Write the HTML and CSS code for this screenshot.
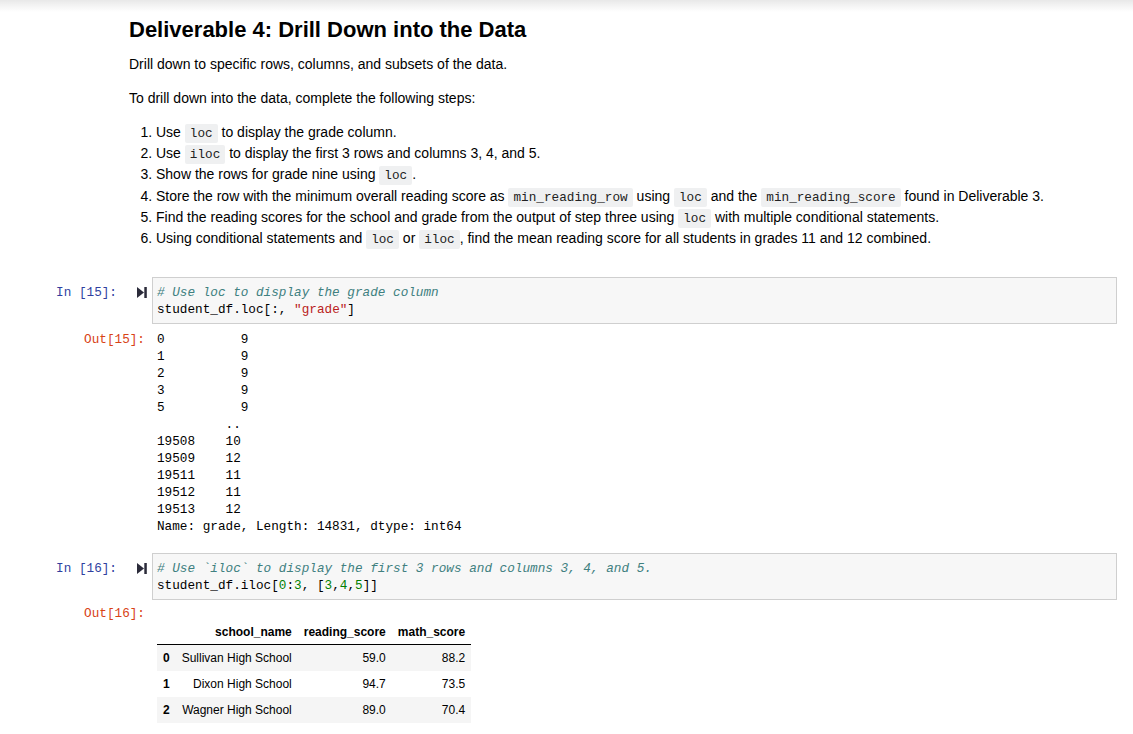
FILE: index.html
```html
<!DOCTYPE html>
<html>
<head>
<meta charset="utf-8">
<link rel="stylesheet" href="styles.css">
</head>
<body>
<div class="topbar"></div>
<div class="notebook">
  <div class="md">
    <h2 class="title">Deliverable 4: Drill Down into the Data</h2>
    <p class="para">Drill down to specific rows, columns, and subsets of the data.</p>
    <p class="para">To drill down into the data, complete the following steps:</p>
    <ol class="steps">
      <li>Use <code class="ic">loc</code> to display the grade column.</li>
      <li>Use <code class="ic">iloc</code> to display the first 3 rows and columns 3, 4, and 5.</li>
      <li>Show the rows for grade nine using <code class="ic">loc</code>.</li>
      <li>Store the row with the minimum overall reading score as <code class="ic">min_reading_row</code> using <code class="ic">loc</code> and the <code class="ic">min_reading_score</code> found in Deliverable 3.</li>
      <li>Find the reading scores for the school and grade from the output of step three using <code class="ic">loc</code> with multiple conditional statements.</li>
      <li>Using conditional statements and <code class="ic">loc</code> or <code class="ic">iloc</code>, find the mean reading score for all students in grades 11 and 12 combined.</li>
    </ol>
  </div>

  <div class="cell cell-first">
    <div class="inrow">
      <div class="prompt in-prompt">In [15]:</div>
      <div class="runbtn"><svg width="10" height="11" viewBox="0 0 10 11"><polygon points="0,0 7,5.5 0,11" fill="#2b2b3a"/><rect x="7.3" y="0" width="2.5" height="11" fill="#2b2b3a"/></svg></div>
      <div class="inbox"><pre class="code"><span class="c"># Use loc to display the grade column</span>
student_df.loc[:, <span class="s">"grade"</span>]</pre></div>
    </div>
    <div class="outrow">
      <div class="prompt out-prompt">Out[15]:</div>
      <pre class="out">0          9
1          9
2          9
3          9
5          9
         ..
19508    10
19509    12
19511    11
19512    11
19513    12
Name: grade, Length: 14831, dtype: int64</pre>
    </div>
  </div>

  <div class="cell cell-second">
    <div class="inrow">
      <div class="prompt in-prompt">In [16]:</div>
      <div class="runbtn"><svg width="10" height="11" viewBox="0 0 10 11"><polygon points="0,0 7,5.5 0,11" fill="#2b2b3a"/><rect x="7.3" y="0" width="2.5" height="11" fill="#2b2b3a"/></svg></div>
      <div class="inbox"><pre class="code"><span class="c"># Use `iloc` to display the first 3 rows and columns 3, 4, and 5.</span>
student_df.iloc[<span class="n">0</span>:<span class="n">3</span>, [<span class="n">3</span>,<span class="n">4</span>,<span class="n">5</span>]]</pre></div>
    </div>
    <div class="outrow">
      <div class="prompt out-prompt">Out[16]:</div>
      <div class="outhtml">
        <table class="df">
          <thead>
            <tr><th></th><th>school_name</th><th>reading_score</th><th>math_score</th></tr>
          </thead>
          <tbody>
            <tr><th>0</th><td>Sullivan High School</td><td>59.0</td><td>88.2</td></tr>
            <tr><th>1</th><td>Dixon High School</td><td>94.7</td><td>73.5</td></tr>
            <tr><th>2</th><td>Wagner High School</td><td>89.0</td><td>70.4</td></tr>
          </tbody>
        </table>
      </div>
    </div>
  </div>
</div>
</body>
</html>
```

FILE: styles.css
```css
html, body {
  margin: 0;
  padding: 0;
  background: #fff;
}
body {
  font-family: "Liberation Sans", Arial, sans-serif;
  color: #000;
  width: 1133px;
  height: 734px;
  overflow: hidden;
}
.topbar {
  height: 12px;
  background: linear-gradient(#e8e8e8, #f2f2f2 40%, #ffffff);
}
.notebook {
  padding-right: 16px;
}
.md {
  padding-left: 129px;
}
.title {
  margin: 5px 0 0;
  font-size: 22px;
  line-height: 26px;
  font-weight: bold;
}
.para {
  margin: 11px 0 0;
  font-size: 14px;
  line-height: 21px;
}
.para + .para {
  margin-top: 13px;
}
.steps {
  margin: 13px 0 0;
  padding-left: 27px;
  font-size: 14px;
  line-height: 21.2px;
}
.ic {
  font-family: "Liberation Mono", Consolas, monospace;
  font-size: 12.7px;
  line-height: 1;
  background: #eff0f1;
  padding: 2px 5px;
  border-radius: 2px;
  color: #222;
}
.cell {
  display: flex;
  flex-direction: column;
}
.cell-first {
  margin-top: 28px;
}
.cell-second {
  margin-top: 18px;
}
.inrow {
  display: flex;
  align-items: flex-start;
}
.prompt {
  font-family: "Liberation Mono", Consolas, monospace;
  font-size: 12.7px;
  line-height: 17px;
  text-align: right;
  box-sizing: border-box;
}
.in-prompt {
  width: 122px;
  padding-right: 5px;
  padding-top: 7px;
  color: #303f9f;
}
.runbtn {
  width: 30px;
  box-sizing: border-box;
  padding-left: 15px;
  padding-top: 10px;
  display: flex;
}
.inbox {
  flex: 1;
  border: 1px solid #cfcfcf;
  background: #f7f7f7;
  padding: 6px 4px 5px;
}
.code, .out {
  margin: 0;
  font-family: "Liberation Mono", Consolas, monospace;
  font-size: 12.7px;
  line-height: 17px;
  color: #000;
}
.c {
  color: #408080;
  font-style: italic;
}
.s {
  color: #ba2121;
}
.n {
  color: #008000;
}
.outrow {
  display: flex;
  align-items: flex-start;
  margin-top: 7px;
}
.out-prompt {
  width: 152px;
  padding-right: 7px;
  color: #d84315;
}
.out {
  padding-left: 5px;
}
.cell-second .outrow {
  margin-top: 5px;
}
.outhtml {
  padding-left: 5px;
  padding-top: 14px;
}
.df {
  border-collapse: collapse;
  border-spacing: 0;
  font-family: "Liberation Sans", Arial, sans-serif;
  font-size: 12px;
  color: #000;
}
.df th, .df td {
  text-align: right;
  padding: 6px 6px;
  line-height: normal;
  vertical-align: middle;
}
.df thead th {
  font-weight: bold;
  padding-bottom: 5px;
}
.df thead {
  border-bottom: 1px solid #000;
}
.df tbody th {
  font-weight: bold;
}
.df tbody tr:nth-child(odd) {
  background: #f5f5f5;
}
```
